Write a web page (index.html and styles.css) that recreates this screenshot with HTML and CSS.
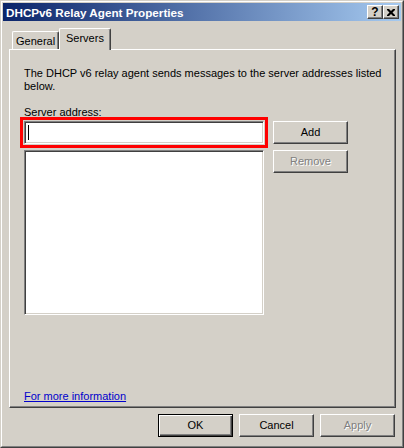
FILE: index.html
```html
<!DOCTYPE html>
<html>
<head>
<meta charset="utf-8">
<link rel="stylesheet" href="styles.css">
</head>
<body>
<div class="window">
  <div class="frame">
    <div class="titlebar">
      <span class="title">DHCPv6 Relay Agent Properties</span>
      <div class="tbtns">
        <div class="tbtn help">?</div>
        <div class="tbtn close">
          <svg width="8" height="7" viewBox="0 0 8 7"><path d="M0 0h2l2 2 2-2h2v1l-2.5 2.5 2.5 2.5v1h-2l-2-2-2 2h-2v-1l2.5-2.5-2.5-2.5z" fill="#000"/></svg>
        </div>
      </div>
    </div>
    <div class="body">
      <div class="tabs">
        <div class="tab">General</div>
        <div class="tab active">Servers</div>
      </div>
      <div class="panel">
        <p class="desc">The DHCP v6 relay agent sends messages to the server addresses listed below.</p>
        <div class="label">Server address:</div>
        <div class="row">
          <div class="leftcol">
            <div class="field input highlight"><span class="caret"></span></div>
            <div class="field list"></div>
          </div>
          <div class="rightcol">
            <div class="btn">Add</div>
            <div class="btn disabled">Remove</div>
          </div>
        </div>
        <div class="spacer"></div>
        <a class="link" href="#">For more information </a>
      </div>
      <div class="footer">
        <div class="btn default">OK</div>
        <div class="btn">Cancel</div>
        <div class="btn disabled">Apply</div>
      </div>
    </div>
  </div>
</div>
</body>
</html>
```

FILE: styles.css
```css
html, body {
  margin: 0;
  padding: 0;
  background: #d4d0c8;
}
body {
  font-family: "Liberation Sans", Arial, sans-serif;
  font-size: 11px;
  line-height: 13px;
  color: #000;
}
.window {
  width: 404px;
  height: 448px;
  box-sizing: border-box;
  border: 1px solid;
  border-color: #d4d0c8 #404040 #404040 #d4d0c8;
}
.frame {
  height: 100%;
  box-sizing: border-box;
  border: 1px solid;
  border-color: #fff #808080 #808080 #fff;
  padding: 1px;
  display: flex;
  flex-direction: column;
}
.titlebar {
  height: 18px;
  display: flex;
  align-items: center;
  padding: 0 2px 0 3px;
  background: linear-gradient(to right, #0a246a, #a6caf0);
}
.title {
  flex: 1;
  color: #fff;
  font-weight: bold;
  font-size: 11.7px;
}
.tbtns {
  display: flex;
}
.tbtn {
  width: 14px;
  height: 12px;
  border: 1px solid;
  border-color: #fff #404040 #404040 #fff;
  box-shadow: inset -1px -1px #808080;
  background: #d4d0c8;
  display: flex;
  align-items: center;
  justify-content: center;
  font-weight: bold;
  font-size: 12px;
  line-height: 12px;
}
.body {
  flex: 1;
  display: flex;
  flex-direction: column;
  padding: 7px 5px 8px 6px;
}
.tabs {
  display: flex;
  align-items: flex-end;
  height: 21px;
  padding-left: 3px;
}
.tab {
  height: 18px;
  box-sizing: border-box;
  padding: 3px 0 0 3px;
  width: 47px;
  border: 1px solid;
  border-bottom: none;
  border-color: #fff #404040 #fff #fff;
  box-shadow: inset -1px 0 #808080;
  border-radius: 2px 2px 0 0;
}
.tab.active {
  width: 52px;
  height: 22px;
  padding: 3px 0 0 6px;
  margin-bottom: -1px;
  position: relative;
  z-index: 1;
  background: #d4d0c8;
}
.panel {
  flex: 1;
  display: flex;
  flex-direction: column;
  border: 1px solid;
  border-color: #fff #404040 #404040 #fff;
  box-shadow: inset -1px -1px #808080;
  padding: 17px 14px 4px 14px;
}
.desc {
  margin: 0;
  width: 365px;
}
.label {
  margin-top: 13px;
}
.row {
  display: flex;
  margin-top: 2px;
}
.leftcol {
  width: 240px;
  display: flex;
  flex-direction: column;
  gap: 6px;
}
.field {
  background: #fff;
  box-sizing: border-box;
  border: 1px solid;
  border-color: #808080 #fff #fff #808080;
  box-shadow: inset 1px 1px #404040, inset -1px -1px #d4d0c8;
}
.input {
  height: 23px;
  padding: 3px 0 0 3px;
}
.highlight {
  outline: 3px solid #ff0000;
  outline-offset: 1px;
}
.caret {
  display: block;
  width: 1px;
  height: 15px;
  background: #000;
}
.list {
  height: 165px;
}
.rightcol {
  margin-left: 9px;
  display: flex;
  flex-direction: column;
  gap: 6px;
}
.btn {
  width: 75px;
  height: 23px;
  box-sizing: border-box;
  border: 1px solid;
  border-color: #fff #404040 #404040 #fff;
  box-shadow: inset -1px -1px #808080;
  display: flex;
  align-items: center;
  justify-content: center;
  background: #d4d0c8;
}
.btn.disabled {
  color: #808080;
  text-shadow: 1px 1px #fff;
}
.btn.default {
  border: 1px solid #000;
  box-shadow: inset 1px 1px #fff, inset -1px -1px #404040, inset -2px -2px #808080;
}
.spacer {
  flex: 1;
}
.link {
  color: #0000cc;
  text-decoration: underline;
  align-self: flex-start;
}
.footer {
  display: flex;
  justify-content: flex-end;
  gap: 6px;
  margin-top: 6px;
  padding-right: 1px;
}
```
